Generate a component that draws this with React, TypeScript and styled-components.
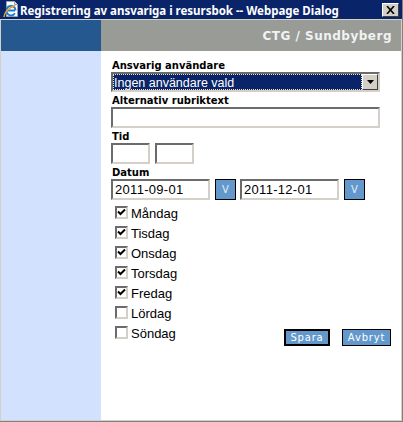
import { createGlobalStyle } from 'styled-components'
import styled from 'styled-components'

const GlobalStyle = createGlobalStyle`
  html, body {
    margin: 0;
    padding: 0;
    background: #fff;
  }
  * {
    box-sizing: border-box;
  }
`;

const Frame = styled.div`
  width: 403px;
  height: 422px;
  display: flex;
  flex-direction: column;
  overflow: hidden;
  background: #d4d0c8;
  padding: 0 1px 1px 1px;
  border-right: 1px solid #808080;
  border-bottom: 1px solid #808080;
`;

const TitleBar = styled.div`
  height: 19px;
  flex: none;
  margin: 0 -1px;
  display: flex;
  align-items: center;
  padding: 0 3px 0 3px;
  background: #0a246a;
`;

const TitleText = styled.div`
  flex: 1;
  margin-left: 0;
  padding-top: 1px;
  color: #fff;
  font: bold 11.5px "Noto Sans", sans-serif;
  font-variant-ligatures: none;
  letter-spacing: -0.02px;
  white-space: nowrap;
`;

const CloseButton = styled.div`
  width: 17px;
  height: 14px;
  display: flex;
  align-items: center;
  justify-content: center;
  background: #d4d0c8;
  border: 1px solid;
  border-color: #fff #404040 #404040 #fff;
`;

const HeaderRow = styled.div`
  height: 31px;
  flex: none;
  margin-top: 1px;
  display: flex;
`;

const HeaderBlue = styled.div`
  width: 100px;
  background: #25588f;
`;

const HeaderGray = styled.div`
  flex: 1;
  display: flex;
  align-items: center;
  justify-content: flex-end;
  padding: 1px 9px 0 0;
  background: #999b97;
  color: #f2f2f2;
  font: bold 12px "DejaVu Sans", sans-serif;
  letter-spacing: 0.5px;
`;

const Body = styled.div`
  flex: 1;
  display: flex;
  min-height: 0;
`;

const Sidebar = styled.div`
  width: 100px;
  flex: none;
  background: #d2e1fd;
`;

const Main = styled.div`
  flex: 1;
  background: #fff;
  padding: 9px 10px 0 10px;
`;

const Label = styled.div`
  height: 12px;
  padding-left: 1px;
  color: #000;
  font: bold 10px/12px "DejaVu Sans", sans-serif;
`;

const Field = styled.div`
  margin-bottom: 3px;
`;

const SelectBox = styled.div`
  width: 269px;
  height: 20px;
  display: flex;
  border: 2px solid;
  border-color: #6b6b6b #d4d0c8 #d4d0c8 #6b6b6b;
`;

const SelectValue = styled.div`
  flex: 1;
  padding: 1px 0 0 1px;
  background: #0a246a;
  outline: 1px dotted #f0e8c0;
  outline-offset: -1px;
  color: #fff;
  font: 12.5px/17px "Liberation Sans", sans-serif;
`;

const SelectArrow = styled.div`
  width: 16px;
  display: flex;
  align-items: center;
  justify-content: center;
  background: #d4d0c8;
  border: 1px solid;
  border-color: #fff #404040 #404040 #fff;
`;

const TextInput = styled.input<{ $width: number }>`
  display: block;
  width: ${props => props.$width}px;
  height: 21px;
  margin: 0;
  padding: 1px 2px;
  background: #fff;
  border: 2px solid;
  border-color: #6b6b6b #d4d0c8 #d4d0c8 #6b6b6b;
  border-radius: 0;
  outline: none;
  color: #000;
  font: 13px "Liberation Sans", sans-serif;
  letter-spacing: 0.3px;
`;

const InputRow = styled.div`
  display: flex;
  gap: 5px;
`;

const PickerButton = styled.div`
  width: 21px;
  height: 21px;
  margin-right: -1px;
  display: flex;
  align-items: center;
  justify-content: center;
  background: #6398cc;
  border: 1px solid #000;
  color: #e4eef8;
  font: 10px "DejaVu Sans", sans-serif;
`;

const BottomRow = styled.div`
  display: flex;
  align-items: flex-end;
  justify-content: space-between;
  margin-top: 3px;
`;

const Days = styled.div`
  display: flex;
  flex-direction: column;
  padding-left: 4px;
`;

const Day = styled.div`
  height: 20px;
  display: flex;
  align-items: center;
  gap: 3px;
  color: #000;
  font: 13px "Liberation Sans", sans-serif;
`;

const CheckBox = styled.span`
  width: 13px;
  height: 13px;
  margin-top: -1px;
  display: flex;
  align-items: center;
  justify-content: center;
  background: #fff;
  border: 2px solid;
  border-color: #6b6b6b #d4d0c8 #d4d0c8 #6b6b6b;
`;

const Buttons = styled.div`
  display: flex;
  gap: 12px;
  margin-bottom: -3px;
`;

const ActionButton = styled.div<{ $isDefault?: boolean; $width: number }>`
  width: ${props => props.$width}px;
  height: 17px;
  display: flex;
  align-items: center;
  justify-content: center;
  background: #6398cc;
  border: ${props => (props.$isDefault ? '2px' : '1px')} solid #000;
  color: #fff;
  font: 10px "DejaVu Sans", sans-serif;
  letter-spacing: 0.8px;
`;

const days = [
  { name: 'Måndag', checked: true },
  { name: 'Tisdag', checked: true },
  { name: 'Onsdag', checked: true },
  { name: 'Torsdag', checked: true },
  { name: 'Fredag', checked: true },
  { name: 'Lördag', checked: false },
  { name: 'Söndag', checked: false },
];

const IeIcon = () => (
  <svg width="17" height="17" viewBox="0 0 17 17">
    <path d="M3.5 0.5h8l3 3v12h-11z" fill="#fff" stroke="#98a2b4" />
    <path d="M11.5 0.5v3h3" fill="#dfe6f2" stroke="#98a2b4" />
    <path d="M3.5 9.5h8.5M3.6 8.5a4.5 4.5 0 0 1 8.8 0v1M3.6 9.5a4.5 4.5 0 0 0 8.3 2.8" fill="none" stroke="#1f7bd6" strokeWidth="1.9" />
    <path d="M1 16C1 12 6 6 12.5 4.5" fill="none" stroke="#e8a820" strokeWidth="1.5" />
  </svg>
);

const App = () => (
  <>
    <GlobalStyle />
    <Frame>
      <TitleBar>
        <IeIcon />
        <TitleText>Registrering av ansvariga i resursbok -- Webpage Dialog</TitleText>
        <CloseButton>
          <svg width="9" height="8" viewBox="0 0 9 8">
            <path d="M1 0l7 8M8 0L1 8" stroke="#000" strokeWidth="1.6" />
          </svg>
        </CloseButton>
      </TitleBar>
      <HeaderRow>
        <HeaderBlue />
        <HeaderGray>CTG / Sundbyberg</HeaderGray>
      </HeaderRow>
      <Body>
        <Sidebar />
        <Main>
          <Label>Ansvarig användare</Label>
          <Field>
            <SelectBox>
              <SelectValue>Ingen användare vald</SelectValue>
              <SelectArrow>
                <svg width="7" height="4" viewBox="0 0 7 4">
                  <path d="M0 0h7L3.5 4z" fill="#000" />
                </svg>
              </SelectArrow>
            </SelectBox>
          </Field>
          <Label>Alternativ rubriktext</Label>
          <Field>
            <TextInput $width={269} readOnly />
          </Field>
          <Label>Tid</Label>
          <Field>
            <InputRow>
              <TextInput $width={39} readOnly />
              <TextInput $width={39} readOnly />
            </InputRow>
          </Field>
          <Label>Datum</Label>
          <InputRow>
            <TextInput $width={99} readOnly value="2011-09-01" />
            <PickerButton>V</PickerButton>
            <TextInput $width={99} readOnly value="2011-12-01" />
            <PickerButton>V</PickerButton>
          </InputRow>
          <BottomRow>
            <Days>
              {days.map(day => (
                <Day key={day.name}>
                  <CheckBox>
                    {day.checked && (
                      <svg width="9" height="9" viewBox="0 0 9 9">
                        <path d="M1 3.5l2.5 2.5L8 1.5" fill="none" stroke="#000" strokeWidth="2" />
                      </svg>
                    )}
                  </CheckBox>
                  {day.name}
                </Day>
              ))}
            </Days>
            <Buttons>
              <ActionButton $isDefault $width={46}>Spara</ActionButton>
              <ActionButton $width={49}>Avbryt</ActionButton>
            </Buttons>
          </BottomRow>
        </Main>
      </Body>
    </Frame>
  </>
);

export default App;
